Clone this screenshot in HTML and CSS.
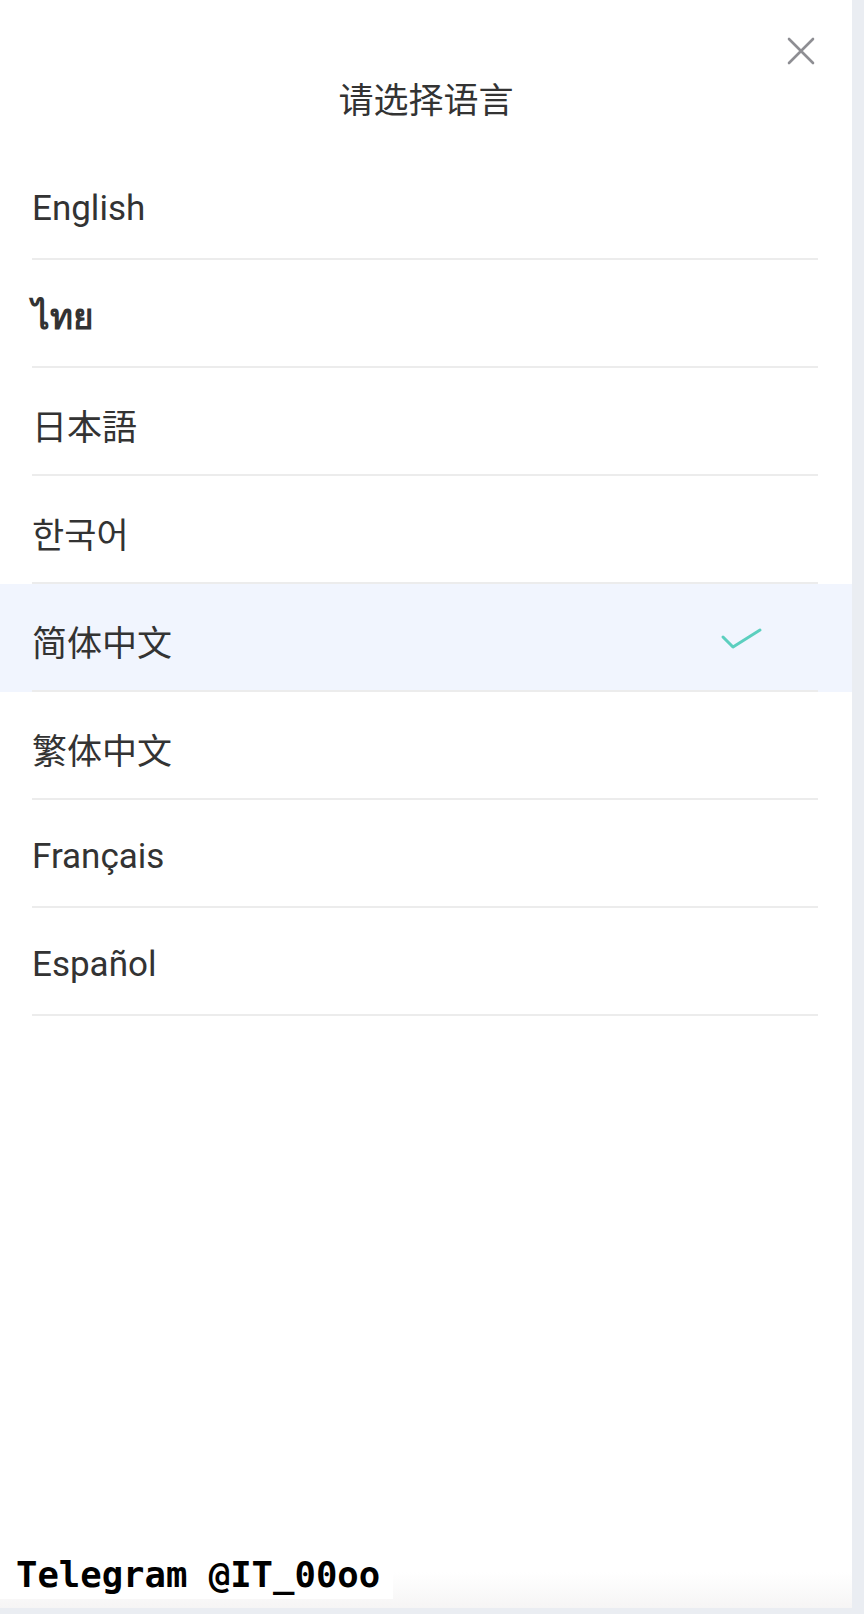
FILE: index.html
```html
<!DOCTYPE html>
<html lang="zh-CN">
<head>
    <meta charset="UTF-8">
    <meta name="viewport" content="width=device-width, initial-scale=1.0">
    <title>请选择语言</title>
    <link rel="stylesheet" href="styles.css">
</head>
<body>

<div class="panel">
    <div class="header">
        <h1 class="title">请选择语言</h1>
        <button class="close" aria-label="close">
            <svg width="28" height="28" viewBox="0 0 28 28">
                <path d="M2 2 L26 26 M26 2 L2 26" stroke="#8e8e93" stroke-width="2.6" stroke-linecap="round" fill="none"/>
            </svg>
        </button>
    </div>

    <ul class="lang-list">
        <li class="lang"><div class="lang-inner">English</div></li>
        <li class="lang"><div class="lang-inner thai" lang="th">ไทย</div></li>
        <li class="lang"><div class="lang-inner" lang="ja">日本語</div></li>
        <li class="lang"><div class="lang-inner" lang="ko">한국어</div></li>
        <li class="lang active">
            <div class="lang-inner">
                <span>简体中文</span>
                <svg class="check" width="44" height="30" viewBox="0 0 44 30">
                    <path d="M3 15 L13 25 L40 8" stroke="#5ccfbf" stroke-width="3" stroke-linecap="round" stroke-linejoin="round" fill="none"/>
                </svg>
            </div>
        </li>
        <li class="lang"><div class="lang-inner" lang="zh-TW">繁体中文</div></li>
        <li class="lang"><div class="lang-inner">Français</div></li>
        <li class="lang"><div class="lang-inner">Español</div></li>
    </ul>

    <div class="watermark">Telegram @IT_00oo</div>
</div>

</body>
</html>
```

FILE: styles.css
```css
body {
    margin: 0;
    background-color: #eaedf2;
    font-family: Roboto, "Noto Sans CJK SC", sans-serif;
    color: #333;
}

.panel {
    position: relative;
    width: 852px;
    height: 1608px;
    background: linear-gradient(to bottom, #fff calc(100% - 36px), #f6f5f5);
}

.header {
    height: 152px;
    box-sizing: border-box;
    padding-top: 80px;
}

.title {
    margin: 0;
    font-size: 35px;
    font-weight: 400;
    line-height: 44px;
    text-align: center;
    color: #333;
}

.close {
    position: absolute;
    top: 37px;
    right: 37px;
    width: 28px;
    height: 28px;
    padding: 0;
    border: none;
    background: none;
    cursor: pointer;
}

.close svg {
    display: block;
}

.lang-list {
    list-style: none;
    margin: 0;
    padding: 0;
}

.lang-inner {
    display: flex;
    align-items: center;
    justify-content: space-between;
    height: 100px;
    padding-top: 6px;
    margin: 0 34px 0 32px;
    border-bottom: 2px solid #ececec;
    font-size: 35px;
    cursor: pointer;
}

.thai {
    font-weight: 700;
}

.lang.active {
    background-color: #f1f5fe;
}

.check {
    display: block;
    margin-top: -6px;
    margin-right: 54px;
}

.watermark {
    position: absolute;
    left: 0;
    bottom: 9px;
    padding: 0 13px 4px 16px;
    background-color: #fff;
    font-family: "DejaVu Sans Mono", monospace;
    font-weight: 700;
    font-size: 35.6px;
    line-height: 40px;
    color: #000;
}
```
